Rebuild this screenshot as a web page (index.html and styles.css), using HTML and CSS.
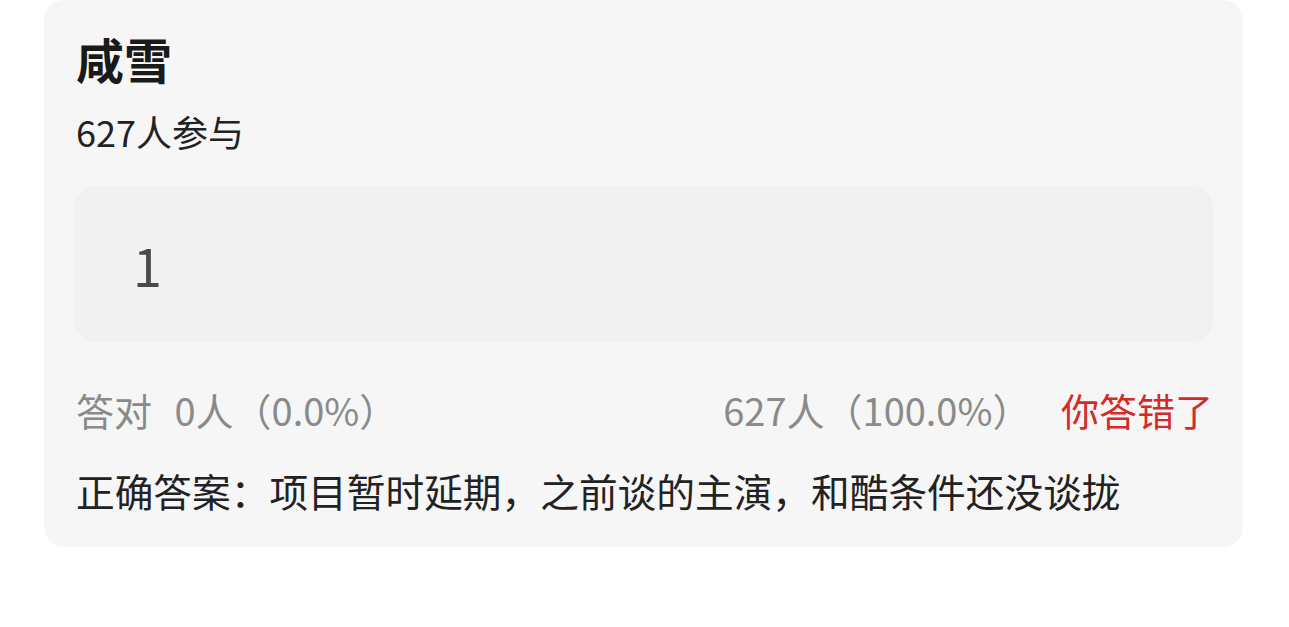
FILE: index.html
```html
<!DOCTYPE html>
<html lang="zh-CN">
<head>
    <meta charset="UTF-8">
    <meta name="viewport" content="width=device-width, initial-scale=1.0">
    <title>咸雪</title>
    <link rel="stylesheet" href="styles.css">
</head>
<body>
    <div class="quiz-card">
        <h1 class="quiz-title">咸雪</h1>
        <div class="quiz-count">627人参与</div>

        <div class="answer-box">
            <span class="answer-value">1</span>
        </div>

        <div class="result-row">
            <div class="result-left">
                <span>答对</span>
                <span class="result-num">0人（0.0%）</span>
            </div>
            <div class="result-right">
                <span>627人（100.0%）</span>
                <span class="result-wrong">你答错了</span>
            </div>
        </div>

        <div class="correct-answer">正确答案：项目暂时延期，之前谈的主演，和酷条件还没谈拢</div>
    </div>
</body>
</html>
```

FILE: styles.css
```css
body {
    margin: 0;
    background-color: #ffffff;
    font-family: "Noto Sans CJK SC", "Noto Sans", sans-serif;
}
.quiz-card {
    width: 1199px;
    box-sizing: border-box;
    margin-left: 44px;
    padding: 28px 30px 32px 30px;
    background-color: #f6f6f6;
    border-radius: 20px;
}
.quiz-title {
    margin: 0;
    padding-left: 2px;
    font-size: 48px;
    line-height: 60px;
    font-weight: 700;
    color: #1a1a1a;
}
.quiz-count {
    margin-top: 21px;
    padding-left: 2px;
    font-size: 36px;
    line-height: 44px;
    color: #222;
}
.answer-box {
    display: flex;
    align-items: center;
    height: 156px;
    margin-top: 33px;
    padding-left: 59px;
    background-color: #f1f1f1;
    border-radius: 22px;
}
.answer-value {
    font-size: 52px;
    color: #4a4a4a;
}
.result-row {
    display: flex;
    justify-content: space-between;
    margin-top: 43px;
    padding-left: 2px;
    font-size: 38px;
    line-height: 50px;
    color: #8a8a8a;
}
.result-left .result-num {
    margin-left: 14px;
}
.result-right .result-wrong {
    margin-left: 22px;
    color: #d32a2a;
}
.correct-answer {
    margin-top: 30px;
    padding-left: 2px;
    font-size: 38.7px;
    line-height: 50px;
    color: #222;
}
```
